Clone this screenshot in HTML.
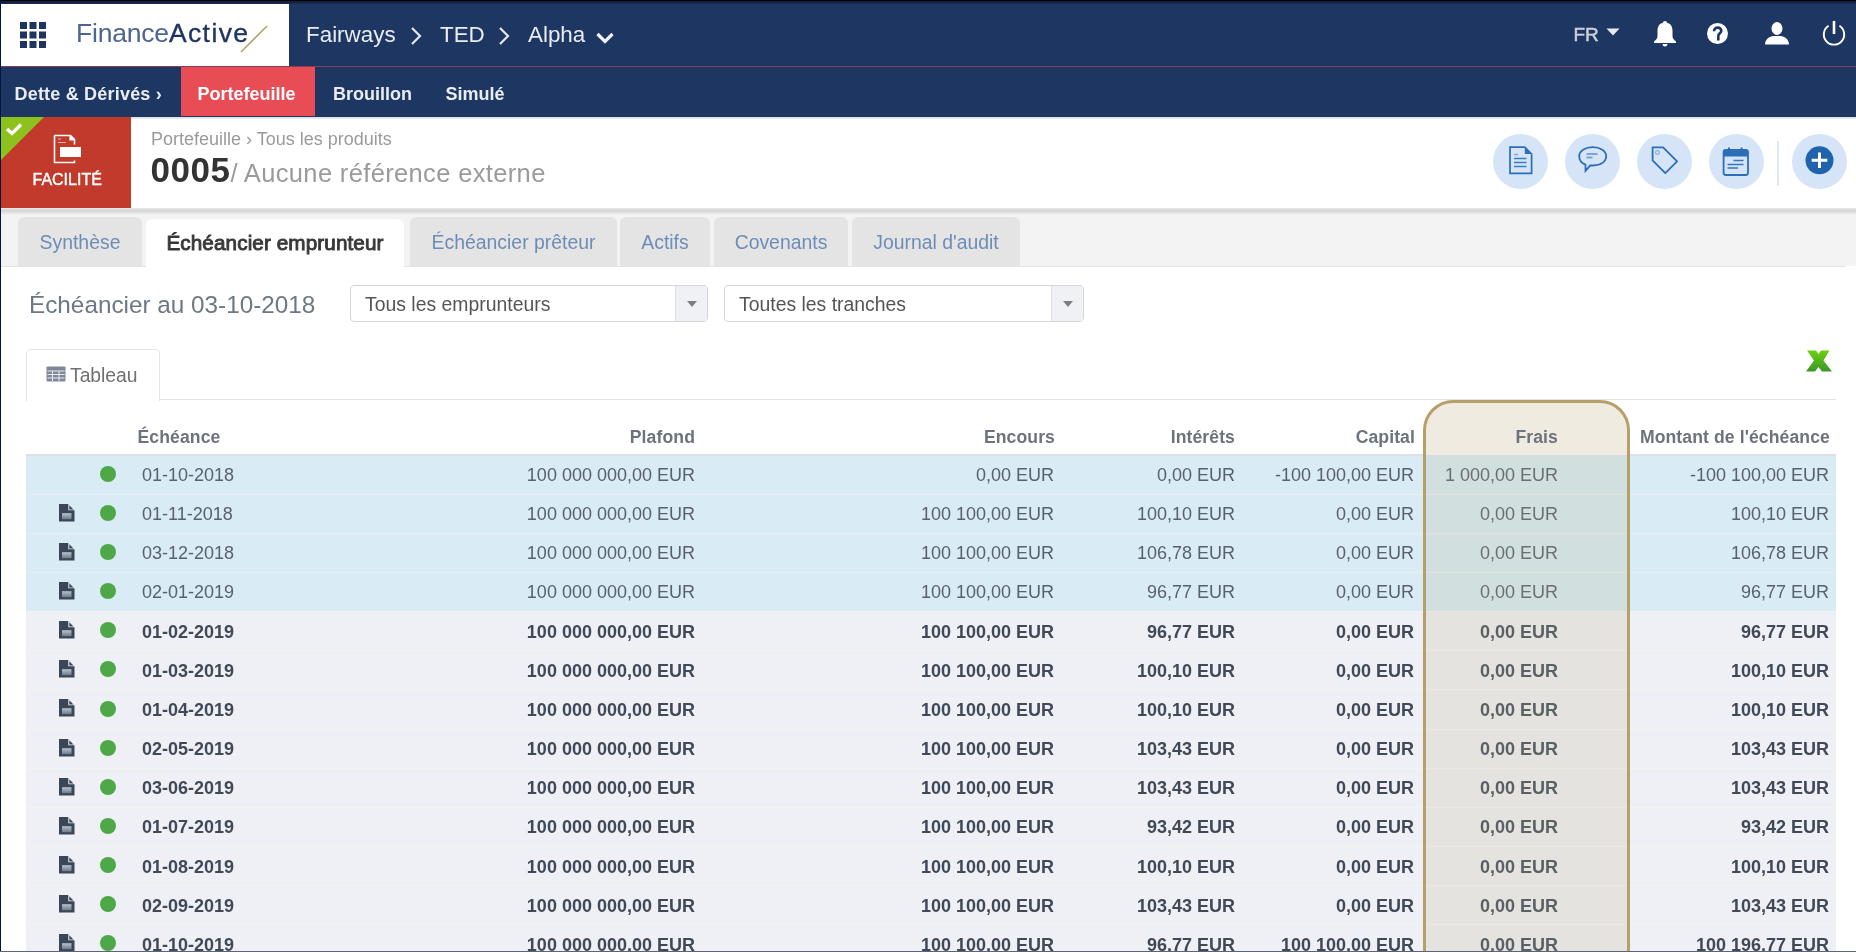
<!DOCTYPE html>
<html><head><meta charset="utf-8">
<style>
*{box-sizing:border-box;margin:0;padding:0}
html,body{width:1856px;height:952px;overflow:hidden;background:#fff;font-family:"Liberation Sans",sans-serif;position:relative}
.a{position:absolute;white-space:nowrap}
#topnav{position:absolute;left:0;top:0;width:1856px;height:67px;background:#1e3762}
#topblack{position:absolute;left:0;top:0;width:1856px;height:1px;background:#000}
#topdark{position:absolute;left:0;top:1px;width:1856px;height:3px;background:linear-gradient(#0e1a36,#1a2d55)}
#logo{position:absolute;left:1px;top:4px;width:288px;height:62px;background:#fff}
#redline{position:absolute;left:0;top:66.3px;width:1856px;height:3px;background:linear-gradient(#5a3a5c,#d0414f 45%,#d0414f 55%,#5a3a5c)}
#nav2{position:absolute;left:0;top:67px;width:1856px;height:50px;background:#1e3762}
#portef{position:absolute;left:181px;top:67px;width:134px;height:49px;background:#e84d55}
.n2{position:absolute;top:82px;font-size:18px;font-weight:700;color:#e9ecf1;line-height:24px}
.nv{position:absolute;top:22px;font-size:22.4px;color:#e9ecf2;line-height:26px}
#header{position:absolute;left:0;top:117px;width:1856px;height:91px;background:#fff}
#facil{position:absolute;left:1px;top:117px;width:130px;height:91px;background:#c13a2c;overflow:hidden}
#tabbar{position:absolute;left:0;top:208px;width:1856px;height:58px;background:#f3f3f3}
#tabshadow{position:absolute;left:0;top:208px;width:1856px;height:7px;background:linear-gradient(#e9e9e9 0%,#d3d3d3 40%,#e2e2e2 65%,#f3f3f3 100%)}
.tab{position:absolute;top:217px;height:49px;background:#e4e4e4;border-radius:6px 6px 0 0;font-size:19.4px;color:#6e8db6;line-height:51px;text-align:center}
#leftborder{position:absolute;left:0;top:0;width:1px;height:952px;background:#02153d}
#bottomborder{position:absolute;left:0;top:951px;width:1856px;height:1px;background:#5d6575}
.circ{position:absolute;top:134px;width:55px;height:55px;border-radius:50%;background:#d5e5f7}
.circ svg{position:absolute;left:0;top:0}
.sel{position:absolute;top:284.5px;height:37.5px;border:1px solid #d3d6da;border-radius:4px;background:#fff;font-size:19.4px;color:#555;line-height:37px;padding-left:14px}
.sel .arr{position:absolute;right:0;top:0;width:32px;height:35px;background:#eff1f5;border-left:1px solid #dde1e6}
.sel .arr:after{content:"";position:absolute;left:11px;top:15px;border-left:5px solid transparent;border-right:5px solid transparent;border-top:6px solid #7b7f85}
.th{top:425px;font-size:17.6px;font-weight:700;color:#6d737c;line-height:24px;letter-spacing:0.1px}
.td{font-size:18px;line-height:40px;color:#59616c}
.td.b{font-weight:700;color:#414957}
.dot{width:16px;height:16px;border-radius:50%;background:#4ea847}
</style></head><body style="filter:blur(0.35px)">
<div id="topnav"></div>
<div id="topblack"></div>
<div id="topdark"></div>
<div id="logo"></div>
<!-- grid icon -->
<svg class="a" style="left:20px;top:22px" width="26" height="26" viewBox="0 0 26 26" fill="#1f3561"><rect x="0" y="0" width="7" height="7"/><rect x="9.5" y="0" width="7" height="7"/><rect x="19" y="0" width="7" height="7"/><rect x="0" y="9.5" width="7" height="7"/><rect x="9.5" y="9.5" width="7" height="7"/><rect x="19" y="9.5" width="7" height="7"/><rect x="0" y="19" width="7" height="7"/><rect x="9.5" y="19" width="7" height="7"/><rect x="19" y="19" width="7" height="7"/></svg>
<div class="a" style="left:76px;top:18px;font-size:26.5px;line-height:30px;color:#4d6590;letter-spacing:-0.2px">Finance<span style="color:#1f3561;-webkit-text-stroke:0.35px #1f3561;letter-spacing:1.4px">Active</span></div>
<svg class="a" style="left:238px;top:24px" width="32" height="30" viewBox="0 0 32 30"><path d="M3 28L29 2" stroke="#b8a46a" stroke-width="1.6"/></svg>
<div id="redline"></div>
<div id="nav2"></div>
<div id="portef"></div>
<div class="n2" style="left:14.5px;letter-spacing:0.2px">Dette &amp; Dérivés ›</div>
<div class="n2" style="left:197.5px;color:#fff">Portefeuille</div>
<div class="n2" style="left:333px">Brouillon</div>
<div class="n2" style="left:445.5px">Simulé</div>
<div class="nv" style="left:306px">Fairways</div>
<svg class="a" style="left:409px;top:26px" width="14" height="20" viewBox="0 0 14 20"><path d="M3 2l8 8-8 8" fill="none" stroke="#e4e8ef" stroke-width="2.2"/></svg>
<div class="nv" style="left:440px">TED</div>
<svg class="a" style="left:497px;top:26px" width="14" height="20" viewBox="0 0 14 20"><path d="M3 2l8 8-8 8" fill="none" stroke="#e4e8ef" stroke-width="2.2"/></svg>
<div class="nv" style="left:528px">Alpha</div>
<svg class="a" style="left:595px;top:31px" width="20" height="14" viewBox="0 0 20 14"><path d="M2.5 3l7.5 7.5 7.5-7.5" fill="none" stroke="#f0f2f6" stroke-width="3.2"/></svg>
<!-- right nav -->
<div class="a" style="left:1573.5px;top:22.5px;font-size:19px;line-height:24px;color:#ccd2dc;-webkit-text-stroke:0.5px #ccd2dc">FR</div>
<svg class="a" style="left:1606px;top:27.5px" width="14" height="8" viewBox="0 0 14 8"><path d="M0.5 0.5h13l-6.5 7z" fill="#e6e9ee"/></svg>
<svg class="a" style="left:1652px;top:20px" width="26" height="27" viewBox="0 0 26 27"><path d="M13 1c1.2 0 2 .8 2 1.8 3.8.9 5.5 4 5.5 8v5.5c0 2 1.4 3.6 3.5 5.2v1.5H2v-1.5c2.1-1.6 3.5-3.2 3.5-5.2V10.8c0-4 1.7-7.1 5.5-8 0-1 .8-1.8 2-1.8z" fill="#fff"/><path d="M10.5 24h5c0 1.5-1.1 2.5-2.5 2.5s-2.5-1-2.5-2.5z" fill="#fff"/></svg>
<svg class="a" style="left:1706px;top:22px" width="23" height="23" viewBox="0 0 23 23"><circle cx="11.5" cy="11.5" r="10.5" fill="#fff"/><path d="M8 9.2c0-2.1 1.6-3.6 3.7-3.6s3.6 1.4 3.6 3.2c0 2.5-3 2.6-3 5.2v4.5" fill="none" stroke="#1e3762" stroke-width="2.6"/></svg>
<svg class="a" style="left:1764px;top:21px" width="26" height="25" viewBox="0 0 26 25"><ellipse cx="13" cy="7.5" rx="5.5" ry="6.5" fill="#fff"/><path d="M1 23.5c0-5 4-8 9-8.5h6c5 .5 9 3.5 9 8.5z" fill="#fff"/></svg>
<svg class="a" style="left:1820px;top:19px" width="28" height="28" viewBox="0 0 28 28"><path d="M8.6 6.8A10.2 10.2 0 1 0 19.4 6.8" fill="none" stroke="#fff" stroke-width="1.9"/><path d="M14 2v13" stroke="#fff" stroke-width="2.6"/></svg>
<div id="header"></div>
<div class="a" style="left:0;top:117px;width:1856px;height:2px;background:linear-gradient(#d3d9e0,#f0f2f5)"></div>
<div id="facil">
<svg class="a" style="left:0;top:0" width="44" height="44" viewBox="0 0 44 44"><path d="M0 0h43L0 43z" fill="#8cc21b"/><path d="M6 12l5 4.5 9-9" fill="none" stroke="#fff" stroke-width="3.4"/></svg>
<svg class="a" style="left:51px;top:17px" width="32" height="31" viewBox="0 0 32 31"><path d="M2.5 1.5h16l4 4v5" fill="none" stroke="#fff" stroke-width="1.6"/><path d="M2.5 1.5v27h20v-2" fill="none" stroke="#fff" stroke-width="1.6"/><path d="M18 1.5v4.5h4.5" fill="#fff" stroke="#fff" stroke-width="1.2"/><rect x="8" y="13" width="21" height="10" fill="#fff"/><path d="M6 5h3M6 8.5h8" stroke="#fff" stroke-width="1" opacity=".6"/></svg>
<div class="a" style="left:31.5px;top:53px;font-size:16px;line-height:20px;color:#fff;-webkit-text-stroke:0.4px #fff">FACILITÉ</div>
</div>
<div class="a" style="left:151px;top:128px;font-size:18px;line-height:22px;color:#9a9a9a">Portefeuille › Tous les produits</div>
<div class="a" style="left:150.5px;top:150px;font-size:35px;line-height:40px;color:#333;font-weight:700;letter-spacing:0.5px">0005<span style="font-size:25.5px;font-weight:400;color:#9b9b9b;letter-spacing:0.35px">/ Aucune référence externe</span></div>
<!-- action circles -->
<div class="circ" style="left:1493px"><svg width="55" height="55" viewBox="0 0 55 55"><path d="M17 13.2h14.8l6.8 6.8v19.3H17z" fill="none" stroke="#2c6db8" stroke-width="1.7"/><path d="M31.8 13.2v6.8h6.8z" fill="#2c6db8"/><path d="M21 24.5h12.5M21 28.5h12.5M21 32.5h12.5" stroke="#3d7bc2" stroke-width="1.6"/><path d="M21 20.5h4" stroke="#7aa3d6" stroke-width="1.5"/></svg></div>
<div class="circ" style="left:1565px"><svg width="55" height="55" viewBox="0 0 55 55"><path d="M27.7 13.2c7.5 0 13.5 3.6 13.5 9s-5.5 9.3-13 9.3c-1 0-1.9 0-2.8-.2l-4.9 5.5v-6.2c-3.9-1.6-6.3-4.6-6.3-8.4 0-5.4 6-9 13.5-9z" fill="none" stroke="#2c6db8" stroke-width="1.8"/><path d="M21.5 20h11M21.5 23.5h6" stroke="#7aa3d6" stroke-width="2.2"/></svg></div>
<div class="circ" style="left:1637px"><svg width="55" height="55" viewBox="0 0 55 55"><path d="M15.6 13.3h10.5l14 14-11.8 11.8-12.7-12.7z" fill="none" stroke="#2c6db8" stroke-width="1.8" stroke-linejoin="round"/><circle cx="20.5" cy="18.5" r="1.9" fill="none" stroke="#8fb2de" stroke-width="1.2"/></svg></div>
<div class="circ" style="left:1709px"><svg width="55" height="55" viewBox="0 0 55 55"><rect x="14.6" y="16" width="24.4" height="25" rx="2.2" fill="none" stroke="#2c6db8" stroke-width="1.8"/><rect x="14.6" y="16" width="24.4" height="6.5" fill="#2c6db8"/><path d="M20 13.5v4.5M32.5 13.5v4.5" stroke="#2c6db8" stroke-width="1.9"/><path d="M24.5 26.5h10M18.5 30.5h16M18.5 34h10.5" stroke="#3574be" stroke-width="1.7"/></svg></div>
<div class="a" style="left:1776.5px;top:141px;width:2.5px;height:45px;background:#e1e8f0"></div>
<div class="circ" style="left:1792px"><svg width="55" height="55" viewBox="0 0 55 55"><circle cx="27.5" cy="26.3" r="14" fill="#1f63ad"/><path d="M27.5 18.5v15.6M19.7 26.3h15.6" stroke="#fff" stroke-width="3"/></svg></div>
<div id="tabbar"></div>
<div id="tabshadow"></div>
<div class="a" style="left:0;top:266px;width:1845px;height:1px;background:#e2e2e2"></div>
<div class="tab" style="left:18px;width:124px">Synthèse</div>
<div class="tab" style="left:146px;width:258px;top:219px;height:48px;line-height:47px;background:#fff;color:#383838;font-size:20.7px;-webkit-text-stroke:0.9px #383838;letter-spacing:0.1px">Échéancier emprunteur</div>
<div class="tab" style="left:410px;width:207px">Échéancier prêteur</div>
<div class="tab" style="left:620px;width:90px">Actifs</div>
<div class="tab" style="left:714px;width:134px">Covenants</div>
<div class="tab" style="left:852px;width:168px">Journal d'audit</div>
<!-- filters -->
<div class="a" style="left:29px;top:291px;font-size:24.3px;line-height:28px;color:#6d7884">Échéancier au 03-10-2018</div>
<div class="sel" style="left:350px;width:358px">Tous les emprunteurs<div class="arr"></div></div>
<div class="sel" style="left:724px;width:360px">Toutes les tranches<div class="arr"></div></div>
<!-- tableau tab -->
<div class="a" style="left:26px;top:399px;width:1810px;height:1px;background:#e3e3e3"></div>
<div class="a" style="left:26px;top:349px;width:134px;height:52px;border:1px solid #e3e3e3;border-bottom:none;border-radius:5px 5px 0 0;background:#fff"></div>
<svg class="a" style="left:46px;top:366.3px" width="20" height="16" viewBox="0 0 20 16"><rect x="0.5" y="0.5" width="19" height="15" rx="1" fill="#7f8898"/><path d="M1.5 5h17M1.5 8.5h17M1.5 12h17M6.5 5v10M13 5v10" stroke="#e8ecf1" stroke-width="1"/></svg>
<div class="a" style="left:70px;top:364px;font-size:19.3px;line-height:24px;color:#707070">Tableau</div>
<!-- excel -->
<svg class="a" style="left:1805px;top:349.5px" width="28" height="23" viewBox="0 0 28 23"><defs><linearGradient id="xg" x1="0" y1="0" x2="0" y2="1"><stop offset="0" stop-color="#6cd00f"/><stop offset="1" stop-color="#3c962c"/></linearGradient></defs><path d="M2 0.5H11L13.5 4L16 0.5H24.5L18.5 10.5L27 21.5H17L13.5 17L10 21.5H1L9 10.5Z" fill="url(#xg)"/></svg>
<div class="a" style="left:26px;top:455.00px;width:1810px;height:39.15px;background:#d9ebf5"></div>
<div class="a" style="left:26px;top:494.15px;width:1810px;height:39.15px;background:#d9ebf5"></div>
<div class="a" style="left:26px;top:493.65px;width:1810px;height:1px;background:#e6eef2"></div>
<div class="a" style="left:26px;top:533.30px;width:1810px;height:39.15px;background:#d9ebf5"></div>
<div class="a" style="left:26px;top:532.80px;width:1810px;height:1px;background:#e6eef2"></div>
<div class="a" style="left:26px;top:572.45px;width:1810px;height:39.15px;background:#d9ebf5"></div>
<div class="a" style="left:26px;top:571.95px;width:1810px;height:1px;background:#e6eef2"></div>
<div class="a" style="left:26px;top:611.60px;width:1810px;height:39.15px;background:#eef0f5"></div>
<div class="a" style="left:26px;top:611.10px;width:1810px;height:1px;background:#f3f3f2"></div>
<div class="a" style="left:26px;top:650.75px;width:1810px;height:39.15px;background:#eef0f5"></div>
<div class="a" style="left:26px;top:650.25px;width:1810px;height:1px;background:#f3f3f2"></div>
<div class="a" style="left:26px;top:689.90px;width:1810px;height:39.15px;background:#eef0f5"></div>
<div class="a" style="left:26px;top:689.40px;width:1810px;height:1px;background:#f3f3f2"></div>
<div class="a" style="left:26px;top:729.05px;width:1810px;height:39.15px;background:#eef0f5"></div>
<div class="a" style="left:26px;top:728.55px;width:1810px;height:1px;background:#f3f3f2"></div>
<div class="a" style="left:26px;top:768.20px;width:1810px;height:39.15px;background:#eef0f5"></div>
<div class="a" style="left:26px;top:767.70px;width:1810px;height:1px;background:#f3f3f2"></div>
<div class="a" style="left:26px;top:807.35px;width:1810px;height:39.15px;background:#eef0f5"></div>
<div class="a" style="left:26px;top:806.85px;width:1810px;height:1px;background:#f3f3f2"></div>
<div class="a" style="left:26px;top:846.50px;width:1810px;height:39.15px;background:#eef0f5"></div>
<div class="a" style="left:26px;top:846.00px;width:1810px;height:1px;background:#f3f3f2"></div>
<div class="a" style="left:26px;top:885.65px;width:1810px;height:39.15px;background:#eef0f5"></div>
<div class="a" style="left:26px;top:885.15px;width:1810px;height:1px;background:#f3f3f2"></div>
<div class="a" style="left:26px;top:924.80px;width:1810px;height:39.15px;background:#eef0f5"></div>
<div class="a" style="left:26px;top:924.30px;width:1810px;height:1px;background:#f3f3f2"></div>
<div class="a" style="left:1423px;top:400px;width:207px;height:560px;border:3px solid #b6a069;border-bottom:none;border-radius:30px 30px 0 0;background:#f0ebe0;overflow:hidden">
<div class="a" style="left:0;top:52.00px;width:201px;height:39.15px;background:#d2dfdf"></div>
<div class="a" style="left:0;top:91.15px;width:201px;height:39.15px;background:#d2dfdf"></div>
<div class="a" style="left:0;top:90.65px;width:201px;height:1px;background:#dfe3da"></div>
<div class="a" style="left:0;top:130.30px;width:201px;height:39.15px;background:#d2dfdf"></div>
<div class="a" style="left:0;top:129.80px;width:201px;height:1px;background:#dfe3da"></div>
<div class="a" style="left:0;top:169.45px;width:201px;height:39.15px;background:#d2dfdf"></div>
<div class="a" style="left:0;top:168.95px;width:201px;height:1px;background:#dfe3da"></div>
<div class="a" style="left:0;top:208.60px;width:201px;height:39.15px;background:#e5e3df"></div>
<div class="a" style="left:0;top:208.10px;width:201px;height:1px;background:#ebe8e0"></div>
<div class="a" style="left:0;top:247.75px;width:201px;height:39.15px;background:#e5e3df"></div>
<div class="a" style="left:0;top:247.25px;width:201px;height:1px;background:#ebe8e0"></div>
<div class="a" style="left:0;top:286.90px;width:201px;height:39.15px;background:#e5e3df"></div>
<div class="a" style="left:0;top:286.40px;width:201px;height:1px;background:#ebe8e0"></div>
<div class="a" style="left:0;top:326.05px;width:201px;height:39.15px;background:#e5e3df"></div>
<div class="a" style="left:0;top:325.55px;width:201px;height:1px;background:#ebe8e0"></div>
<div class="a" style="left:0;top:365.20px;width:201px;height:39.15px;background:#e5e3df"></div>
<div class="a" style="left:0;top:364.70px;width:201px;height:1px;background:#ebe8e0"></div>
<div class="a" style="left:0;top:404.35px;width:201px;height:39.15px;background:#e5e3df"></div>
<div class="a" style="left:0;top:403.85px;width:201px;height:1px;background:#ebe8e0"></div>
<div class="a" style="left:0;top:443.50px;width:201px;height:39.15px;background:#e5e3df"></div>
<div class="a" style="left:0;top:443.00px;width:201px;height:1px;background:#ebe8e0"></div>
<div class="a" style="left:0;top:482.65px;width:201px;height:39.15px;background:#e5e3df"></div>
<div class="a" style="left:0;top:482.15px;width:201px;height:1px;background:#ebe8e0"></div>
<div class="a" style="left:0;top:521.80px;width:201px;height:39.15px;background:#e5e3df"></div>
<div class="a" style="left:0;top:521.30px;width:201px;height:1px;background:#ebe8e0"></div>
</div>
<div class="a dot" style="left:99.5px;top:465.60px"></div>
<div class="a td" style="left:142px;top:455.00px">01-10-2018</div>
<div class="a td" style="right:1161px;top:455.00px">100 000 000,00 EUR</div>
<div class="a td" style="right:802px;top:455.00px">0,00 EUR</div>
<div class="a td" style="right:621px;top:455.00px">0,00 EUR</div>
<div class="a td" style="right:442px;top:455.00px">-100 100,00 EUR</div>
<div class="a td" style="right:298px;top:455.00px;color:#6a6f72">1 000,00 EUR</div>
<div class="a td" style="right:27px;top:455.00px">-100 100,00 EUR</div>
<svg class="a" style="left:59px;top:503.6px" width="16" height="18" viewBox="0 0 16 18"><defs><linearGradient id="dg503" x1="0" y1="0" x2="0" y2="1"><stop offset="0" stop-color="#b9c3ce"/><stop offset="1" stop-color="#6d7a8b"/></linearGradient></defs><path d="M0 0h9.3v6.2h6.2V17.5H0z" fill="#3b4657"/><path d="M10.3 1.2l4.2 4.2h-4.2z" fill="#3b4657"/><rect x="3" y="9.2" width="9.5" height="6" fill="url(#dg503)"/></svg>
<div class="a dot" style="left:99.5px;top:504.75px"></div>
<div class="a td" style="left:142px;top:494.15px">01-11-2018</div>
<div class="a td" style="right:1161px;top:494.15px">100 000 000,00 EUR</div>
<div class="a td" style="right:802px;top:494.15px">100 100,00 EUR</div>
<div class="a td" style="right:621px;top:494.15px">100,10 EUR</div>
<div class="a td" style="right:442px;top:494.15px">0,00 EUR</div>
<div class="a td" style="right:298px;top:494.15px;color:#6a6f72">0,00 EUR</div>
<div class="a td" style="right:27px;top:494.15px">100,10 EUR</div>
<svg class="a" style="left:59px;top:542.8px" width="16" height="18" viewBox="0 0 16 18"><defs><linearGradient id="dg542" x1="0" y1="0" x2="0" y2="1"><stop offset="0" stop-color="#b9c3ce"/><stop offset="1" stop-color="#6d7a8b"/></linearGradient></defs><path d="M0 0h9.3v6.2h6.2V17.5H0z" fill="#3b4657"/><path d="M10.3 1.2l4.2 4.2h-4.2z" fill="#3b4657"/><rect x="3" y="9.2" width="9.5" height="6" fill="url(#dg542)"/></svg>
<div class="a dot" style="left:99.5px;top:543.90px"></div>
<div class="a td" style="left:142px;top:533.30px">03-12-2018</div>
<div class="a td" style="right:1161px;top:533.30px">100 000 000,00 EUR</div>
<div class="a td" style="right:802px;top:533.30px">100 100,00 EUR</div>
<div class="a td" style="right:621px;top:533.30px">106,78 EUR</div>
<div class="a td" style="right:442px;top:533.30px">0,00 EUR</div>
<div class="a td" style="right:298px;top:533.30px;color:#6a6f72">0,00 EUR</div>
<div class="a td" style="right:27px;top:533.30px">106,78 EUR</div>
<svg class="a" style="left:59px;top:582.0px" width="16" height="18" viewBox="0 0 16 18"><defs><linearGradient id="dg582" x1="0" y1="0" x2="0" y2="1"><stop offset="0" stop-color="#b9c3ce"/><stop offset="1" stop-color="#6d7a8b"/></linearGradient></defs><path d="M0 0h9.3v6.2h6.2V17.5H0z" fill="#3b4657"/><path d="M10.3 1.2l4.2 4.2h-4.2z" fill="#3b4657"/><rect x="3" y="9.2" width="9.5" height="6" fill="url(#dg582)"/></svg>
<div class="a dot" style="left:99.5px;top:583.05px"></div>
<div class="a td" style="left:142px;top:572.45px">02-01-2019</div>
<div class="a td" style="right:1161px;top:572.45px">100 000 000,00 EUR</div>
<div class="a td" style="right:802px;top:572.45px">100 100,00 EUR</div>
<div class="a td" style="right:621px;top:572.45px">96,77 EUR</div>
<div class="a td" style="right:442px;top:572.45px">0,00 EUR</div>
<div class="a td" style="right:298px;top:572.45px;color:#6a6f72">0,00 EUR</div>
<div class="a td" style="right:27px;top:572.45px">96,77 EUR</div>
<svg class="a" style="left:59px;top:621.1px" width="16" height="18" viewBox="0 0 16 18"><defs><linearGradient id="dg621" x1="0" y1="0" x2="0" y2="1"><stop offset="0" stop-color="#b9c3ce"/><stop offset="1" stop-color="#6d7a8b"/></linearGradient></defs><path d="M0 0h9.3v6.2h6.2V17.5H0z" fill="#3b4657"/><path d="M10.3 1.2l4.2 4.2h-4.2z" fill="#3b4657"/><rect x="3" y="9.2" width="9.5" height="6" fill="url(#dg621)"/></svg>
<div class="a dot" style="left:99.5px;top:622.20px"></div>
<div class="a td b" style="left:142px;top:611.60px">01-02-2019</div>
<div class="a td b" style="right:1161px;top:611.60px">100 000 000,00 EUR</div>
<div class="a td b" style="right:802px;top:611.60px">100 100,00 EUR</div>
<div class="a td b" style="right:621px;top:611.60px">96,77 EUR</div>
<div class="a td b" style="right:442px;top:611.60px">0,00 EUR</div>
<div class="a td b" style="right:298px;top:611.60px;color:#5b6064">0,00 EUR</div>
<div class="a td b" style="right:27px;top:611.60px">96,77 EUR</div>
<svg class="a" style="left:59px;top:660.2px" width="16" height="18" viewBox="0 0 16 18"><defs><linearGradient id="dg660" x1="0" y1="0" x2="0" y2="1"><stop offset="0" stop-color="#b9c3ce"/><stop offset="1" stop-color="#6d7a8b"/></linearGradient></defs><path d="M0 0h9.3v6.2h6.2V17.5H0z" fill="#3b4657"/><path d="M10.3 1.2l4.2 4.2h-4.2z" fill="#3b4657"/><rect x="3" y="9.2" width="9.5" height="6" fill="url(#dg660)"/></svg>
<div class="a dot" style="left:99.5px;top:661.35px"></div>
<div class="a td b" style="left:142px;top:650.75px">01-03-2019</div>
<div class="a td b" style="right:1161px;top:650.75px">100 000 000,00 EUR</div>
<div class="a td b" style="right:802px;top:650.75px">100 100,00 EUR</div>
<div class="a td b" style="right:621px;top:650.75px">100,10 EUR</div>
<div class="a td b" style="right:442px;top:650.75px">0,00 EUR</div>
<div class="a td b" style="right:298px;top:650.75px;color:#5b6064">0,00 EUR</div>
<div class="a td b" style="right:27px;top:650.75px">100,10 EUR</div>
<svg class="a" style="left:59px;top:699.4px" width="16" height="18" viewBox="0 0 16 18"><defs><linearGradient id="dg699" x1="0" y1="0" x2="0" y2="1"><stop offset="0" stop-color="#b9c3ce"/><stop offset="1" stop-color="#6d7a8b"/></linearGradient></defs><path d="M0 0h9.3v6.2h6.2V17.5H0z" fill="#3b4657"/><path d="M10.3 1.2l4.2 4.2h-4.2z" fill="#3b4657"/><rect x="3" y="9.2" width="9.5" height="6" fill="url(#dg699)"/></svg>
<div class="a dot" style="left:99.5px;top:700.50px"></div>
<div class="a td b" style="left:142px;top:689.90px">01-04-2019</div>
<div class="a td b" style="right:1161px;top:689.90px">100 000 000,00 EUR</div>
<div class="a td b" style="right:802px;top:689.90px">100 100,00 EUR</div>
<div class="a td b" style="right:621px;top:689.90px">100,10 EUR</div>
<div class="a td b" style="right:442px;top:689.90px">0,00 EUR</div>
<div class="a td b" style="right:298px;top:689.90px;color:#5b6064">0,00 EUR</div>
<div class="a td b" style="right:27px;top:689.90px">100,10 EUR</div>
<svg class="a" style="left:59px;top:738.5px" width="16" height="18" viewBox="0 0 16 18"><defs><linearGradient id="dg738" x1="0" y1="0" x2="0" y2="1"><stop offset="0" stop-color="#b9c3ce"/><stop offset="1" stop-color="#6d7a8b"/></linearGradient></defs><path d="M0 0h9.3v6.2h6.2V17.5H0z" fill="#3b4657"/><path d="M10.3 1.2l4.2 4.2h-4.2z" fill="#3b4657"/><rect x="3" y="9.2" width="9.5" height="6" fill="url(#dg738)"/></svg>
<div class="a dot" style="left:99.5px;top:739.65px"></div>
<div class="a td b" style="left:142px;top:729.05px">02-05-2019</div>
<div class="a td b" style="right:1161px;top:729.05px">100 000 000,00 EUR</div>
<div class="a td b" style="right:802px;top:729.05px">100 100,00 EUR</div>
<div class="a td b" style="right:621px;top:729.05px">103,43 EUR</div>
<div class="a td b" style="right:442px;top:729.05px">0,00 EUR</div>
<div class="a td b" style="right:298px;top:729.05px;color:#5b6064">0,00 EUR</div>
<div class="a td b" style="right:27px;top:729.05px">103,43 EUR</div>
<svg class="a" style="left:59px;top:777.7px" width="16" height="18" viewBox="0 0 16 18"><defs><linearGradient id="dg777" x1="0" y1="0" x2="0" y2="1"><stop offset="0" stop-color="#b9c3ce"/><stop offset="1" stop-color="#6d7a8b"/></linearGradient></defs><path d="M0 0h9.3v6.2h6.2V17.5H0z" fill="#3b4657"/><path d="M10.3 1.2l4.2 4.2h-4.2z" fill="#3b4657"/><rect x="3" y="9.2" width="9.5" height="6" fill="url(#dg777)"/></svg>
<div class="a dot" style="left:99.5px;top:778.80px"></div>
<div class="a td b" style="left:142px;top:768.20px">03-06-2019</div>
<div class="a td b" style="right:1161px;top:768.20px">100 000 000,00 EUR</div>
<div class="a td b" style="right:802px;top:768.20px">100 100,00 EUR</div>
<div class="a td b" style="right:621px;top:768.20px">103,43 EUR</div>
<div class="a td b" style="right:442px;top:768.20px">0,00 EUR</div>
<div class="a td b" style="right:298px;top:768.20px;color:#5b6064">0,00 EUR</div>
<div class="a td b" style="right:27px;top:768.20px">103,43 EUR</div>
<svg class="a" style="left:59px;top:816.8px" width="16" height="18" viewBox="0 0 16 18"><defs><linearGradient id="dg816" x1="0" y1="0" x2="0" y2="1"><stop offset="0" stop-color="#b9c3ce"/><stop offset="1" stop-color="#6d7a8b"/></linearGradient></defs><path d="M0 0h9.3v6.2h6.2V17.5H0z" fill="#3b4657"/><path d="M10.3 1.2l4.2 4.2h-4.2z" fill="#3b4657"/><rect x="3" y="9.2" width="9.5" height="6" fill="url(#dg816)"/></svg>
<div class="a dot" style="left:99.5px;top:817.95px"></div>
<div class="a td b" style="left:142px;top:807.35px">01-07-2019</div>
<div class="a td b" style="right:1161px;top:807.35px">100 000 000,00 EUR</div>
<div class="a td b" style="right:802px;top:807.35px">100 100,00 EUR</div>
<div class="a td b" style="right:621px;top:807.35px">93,42 EUR</div>
<div class="a td b" style="right:442px;top:807.35px">0,00 EUR</div>
<div class="a td b" style="right:298px;top:807.35px;color:#5b6064">0,00 EUR</div>
<div class="a td b" style="right:27px;top:807.35px">93,42 EUR</div>
<svg class="a" style="left:59px;top:856.0px" width="16" height="18" viewBox="0 0 16 18"><defs><linearGradient id="dg856" x1="0" y1="0" x2="0" y2="1"><stop offset="0" stop-color="#b9c3ce"/><stop offset="1" stop-color="#6d7a8b"/></linearGradient></defs><path d="M0 0h9.3v6.2h6.2V17.5H0z" fill="#3b4657"/><path d="M10.3 1.2l4.2 4.2h-4.2z" fill="#3b4657"/><rect x="3" y="9.2" width="9.5" height="6" fill="url(#dg856)"/></svg>
<div class="a dot" style="left:99.5px;top:857.10px"></div>
<div class="a td b" style="left:142px;top:846.50px">01-08-2019</div>
<div class="a td b" style="right:1161px;top:846.50px">100 000 000,00 EUR</div>
<div class="a td b" style="right:802px;top:846.50px">100 100,00 EUR</div>
<div class="a td b" style="right:621px;top:846.50px">100,10 EUR</div>
<div class="a td b" style="right:442px;top:846.50px">0,00 EUR</div>
<div class="a td b" style="right:298px;top:846.50px;color:#5b6064">0,00 EUR</div>
<div class="a td b" style="right:27px;top:846.50px">100,10 EUR</div>
<svg class="a" style="left:59px;top:895.1px" width="16" height="18" viewBox="0 0 16 18"><defs><linearGradient id="dg895" x1="0" y1="0" x2="0" y2="1"><stop offset="0" stop-color="#b9c3ce"/><stop offset="1" stop-color="#6d7a8b"/></linearGradient></defs><path d="M0 0h9.3v6.2h6.2V17.5H0z" fill="#3b4657"/><path d="M10.3 1.2l4.2 4.2h-4.2z" fill="#3b4657"/><rect x="3" y="9.2" width="9.5" height="6" fill="url(#dg895)"/></svg>
<div class="a dot" style="left:99.5px;top:896.25px"></div>
<div class="a td b" style="left:142px;top:885.65px">02-09-2019</div>
<div class="a td b" style="right:1161px;top:885.65px">100 000 000,00 EUR</div>
<div class="a td b" style="right:802px;top:885.65px">100 100,00 EUR</div>
<div class="a td b" style="right:621px;top:885.65px">103,43 EUR</div>
<div class="a td b" style="right:442px;top:885.65px">0,00 EUR</div>
<div class="a td b" style="right:298px;top:885.65px;color:#5b6064">0,00 EUR</div>
<div class="a td b" style="right:27px;top:885.65px">103,43 EUR</div>
<svg class="a" style="left:59px;top:934.3px" width="16" height="18" viewBox="0 0 16 18"><defs><linearGradient id="dg934" x1="0" y1="0" x2="0" y2="1"><stop offset="0" stop-color="#b9c3ce"/><stop offset="1" stop-color="#6d7a8b"/></linearGradient></defs><path d="M0 0h9.3v6.2h6.2V17.5H0z" fill="#3b4657"/><path d="M10.3 1.2l4.2 4.2h-4.2z" fill="#3b4657"/><rect x="3" y="9.2" width="9.5" height="6" fill="url(#dg934)"/></svg>
<div class="a dot" style="left:99.5px;top:935.40px"></div>
<div class="a td b" style="left:142px;top:924.80px">01-10-2019</div>
<div class="a td b" style="right:1161px;top:924.80px">100 000 000,00 EUR</div>
<div class="a td b" style="right:802px;top:924.80px">100 100,00 EUR</div>
<div class="a td b" style="right:621px;top:924.80px">96,77 EUR</div>
<div class="a td b" style="right:442px;top:924.80px">100 100,00 EUR</div>
<div class="a td b" style="right:298px;top:924.80px;color:#5b6064">0,00 EUR</div>
<div class="a td b" style="right:27px;top:924.80px">100 196,77 EUR</div>
<div class="a th" style="left:137.5px">Échéance</div>
<div class="a" style="left:26px;top:454px;width:1397px;height:1.5px;background:#dde1e4"></div>
<div class="a" style="left:1630px;top:454px;width:206px;height:1.5px;background:#dde1e4"></div>
<div class="a th" style="right:1161px">Plafond</div>
<div class="a th" style="right:801px">Encours</div>
<div class="a th" style="right:621px">Intérêts</div>
<div class="a th" style="right:441px">Capital</div>
<div class="a th" style="right:298px">Frais</div>
<div class="a th" style="right:26px">Montant de l'échéance</div>
<div id="leftborder"></div>
<div id="bottomborder"></div>
</body></html>
